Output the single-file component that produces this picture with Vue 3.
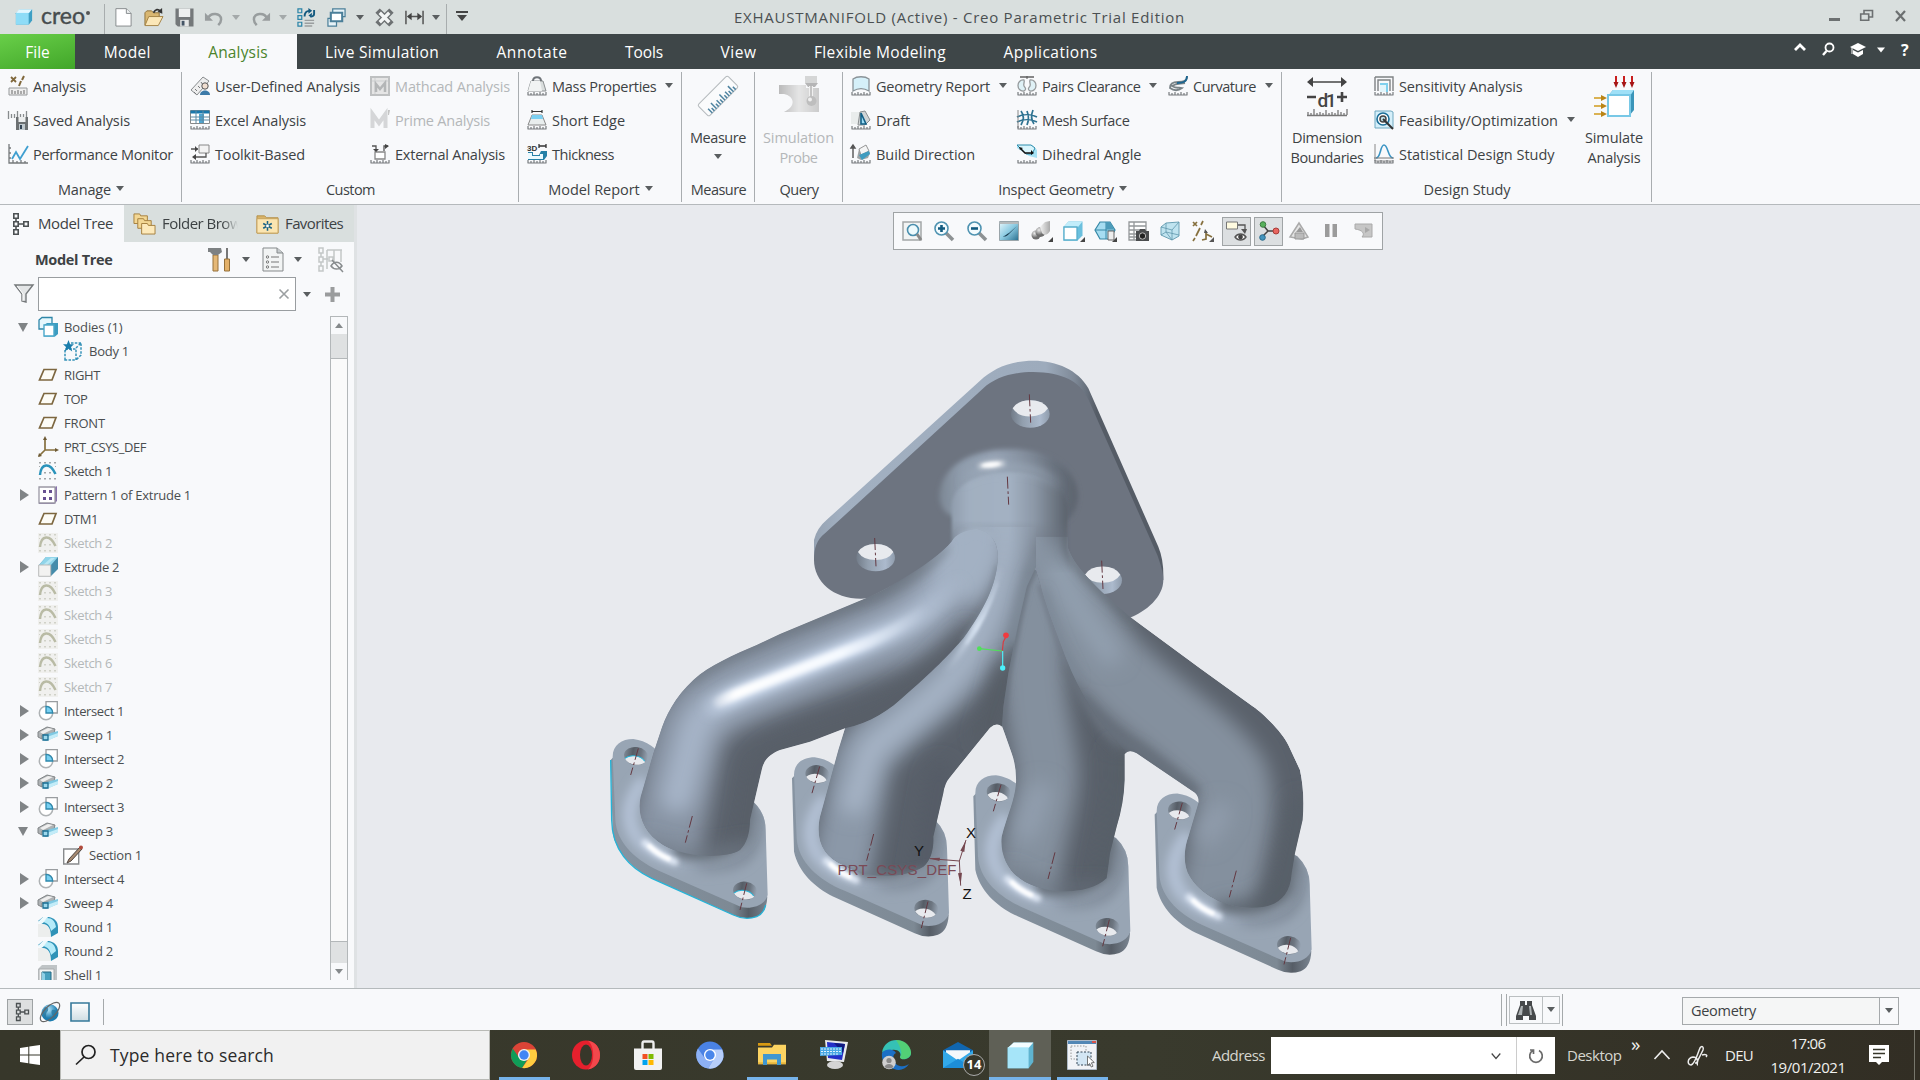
<script setup>
// Adjusts letter spacing so that a label takes up the given width in pixels.
const vFit = {
  mounted(el, { value }) {
    if (!value) return
    const width = el.getBoundingClientRect().width
    el.style.letterSpacing = (value - width) / el.textContent.length + 'px'
  },
}

const ruler = '<path d="M.5 19h19M1 16v3M4 17v2M7 16v3M10 17v2M13 16v3M16 17v2M19 16v3" stroke="#777b7e" fill="none" stroke-width="1.2"/>'
const tree = (c) => `<g fill="none" stroke="${c}" stroke-width="1.6"><path d="M1.8 1.8h4.4v4.4H1.8zM1.8 9.8h4.4v4.4H1.8zM1.8 17.8h4.4v4.4H1.8zM11.8 9.8h4.4v4.4h-4.4zM4 6v4M4 14v4M6.200 12H12"/></g>`
const sketch = (c, d) => `<g fill="${d}"><path d="M1 1h2v1.500H1zM6 1h2v1.500H6zM11 1h2v1.500h-2zM16 1h2v1.500h-2zM1 17h2v1.500H1zM6 17h2v1.500H6zM11 17h2v1.500h-2zM16 17h2v1.500h-2zM6 11h2v1.500H6zM11 11h2v1.500h-2zM1 5h1v1H1zM17 5h1v1h-1z"/></g><path d="M2 14C3 2 12 1 17.500 13" fill="none" stroke="${c}" stroke-width="2.500"/>`

const icons = {
  cube: '<path d="M1 6.500 5 2h14v12.500L15.500 19H1z" fill="#3e9fc4"/><path d="M1 6h14.500L19 2H4.500z" fill="#e2f7ff"/><path d="M1 6h14.200v13H1z" fill="#8edcf7"/>',
  bigcube: '<path d="M.500 5 5 1h14.500v14L16 19.500H.500z" fill="#5fb4d0"/><path d="M.500 5H16l3.500-4H5z" fill="#f2fcff"/><path d="M.500 4.500H16v15H.500z" fill="#a6e5f9"/>',
  newdoc: '<path d="M2 .7h11l5 5V19H2z" fill="#fff" stroke="#85898b"/><path d="M13 .7v5h5" fill="#eef0f1" stroke="#85898b"/>',
  open: '<path d="M1 18V5l2-2h5l2 2h6v5" fill="#d9b772" stroke="#8e713b"/><path d="M1 18.500 5 9h15l-5 9.500z" fill="#fbe7b8" stroke="#a38245"/><path d="M10 5c2-4 5-4 7-2" fill="none" stroke="#333" stroke-width="1.800"/><path d="m19 0 .3 6-5-2z" fill="#333"/>',
  save: '<path d="M.5.500h19v19H3l-2.500-2.500z" fill="#74787a"/><path d="M4 .500h12v9H4z" fill="#eef0f0"/><path d="M5.500 12.500h9v7h-9z" fill="#e4e6e6"/><path d="M7 13.500h3v5H7z" fill="#456"/>',
  undo: '<path d="M4 11c3-7 14-6 14 1 0 3-1 4-3 6" fill="none" stroke="#989d9e" stroke-width="2.600"/><path d="M1 5v8.500h8.500z" fill="#989d9e"/>',
  redo: '<path d="M16 11C13 4 2 5 2 12c0 3 1 4 3 6" fill="none" stroke="#989d9e" stroke-width="2.600"/><path d="M19 5v8.500h-8.500z" fill="#989d9e"/>',
  regen: '<g fill="none" stroke="#2a84a8" stroke-width="1.300"><path d="M1 1h4v4H1zM1 8h4v4H1zM1 15h4v4H1z"/></g><path d="M8 13h10M8 16h10M8 19h8" stroke="#9a9e9f" stroke-width="1.500"/><path d="M8 9C8 4 11 3 13 3M18 2v4c0 2-2 3-4 3" stroke="#145a80" stroke-width="2" fill="none"/><path d="m12 0 4 3-4 3zM15 10l-3-2 4-3z" fill="#145a80"/>',
  windows: '<g fill="#e7f3f8" stroke="#4b7f99" stroke-width="1.300"><path d="M6 1h13v8H6z"/><path d="M1 11h9v8H1z"/><path d="M4 5h12v9H4z" stroke-width="2.200" fill="#fff"/></g>',
  closewin: '<path d="m5 5 10 10M15 5 5 15" stroke="#6d7173" stroke-width="6.500" stroke-linecap="square"/><path d="m5 5 10 10M15 5 5 15" stroke="#f4f6f6" stroke-width="3.500"/>',
  dimtool: '<path d="M1 3v14M19 3v14M3 9h14" stroke="#555" stroke-width="1.600"/><path d="m2 9 5-4v8zM18 9l-5-4v8z" fill="#444"/>',
  analysis: '<path d="m3 1 5 5M8 1 3 6" stroke="#80683c" stroke-width="1.800"/><path d="m16 0-2 4M13 5l-2 5" stroke="#80683c" stroke-width="2"/><path d="M1 12h18v7H1z" fill="#eee" stroke="#96999b"/><path d="M4 14v4M7 15v3M10 14v4M13 15v3M16 14v4" stroke="#666"/>',
  savedan: '<path d="M.500 1v8M3.500 4v4M6.500 4v4M9.500 1v7M12.500 4v4M15.500 4v4M18.500 1v6" stroke="#888c8e" stroke-width="1.300"/><path d="M8 7h12v13H8z" fill="#6c7072"/><path d="M10.500 7h7v5h-7z" fill="#eceeee"/><path d="M11 14h6v6h-6z" fill="#bfc8cd"/><path d="M12 15h2v4h-2z" fill="#345"/>',
  perf: '<path d="M1 0v19h19M1 4h2M1 9h2M1 14h2M5 19v-3M9 19v-2M13 19v-3M17 19v-2" stroke="#75797b" stroke-width="1.300" fill="none"/><path d="m4 15 4-7 4 7 8-13" stroke="#3f9fd0" stroke-width="1.800" fill="none"/>',
  userdef: '<path d="m1 14 12-13 6 4L7 19z" fill="#eee" stroke="#888c8e"/><path d="m5 13 2 2M8 10l2 2M11 6l2 3M4 16l2 2" stroke="#77797b"/><circle cx="15" cy="10" r="3.200" fill="#f0ded0" stroke="#555"/><path d="M10 19c0-6 10-6 10 0z" fill="#3d7ba9"/>',
  excel: '<path d="M.500.500h19v13H.500z" fill="#fff" stroke="#888"/><path d="M.500.500h19v3H.500z" fill="#1a78ac"/><path d="M9 4h5v9H9z" fill="#4ea5d0"/><path d="M6 .500v13M13 .500v13M.500 7h19M.500 10h19" stroke="#5c8ba5"/>' + ruler,
  toolkit: '<path d="M9 1h10v8H9z" fill="#f3f3f3" stroke="#888"/><path d="M1 5h7M16 9v4H4" stroke="#555" fill="none" stroke-width="1.300"/><path d="m8 5-3-3v6zM2 13l4-3v6z" fill="#444"/>' + ruler,
  mathcad: '<path d="M1 1h18v18H1z" fill="#e2e2e2" stroke="#b5b7b8" stroke-width="2"/><path d="M2 5h16M5 2v16" stroke="#c6c8c9"/><path d="M6 16V8l4 5 5-6v9" fill="none" stroke="#a9abac" stroke-width="2.500"/>',
  prime: '<path d="M2.500 18V4l6.500 9 6.500-9v14" fill="none" stroke="#cfd1d2" stroke-width="4"/><path d="M18 0h2l-1 5h-1z" fill="#bbb"/>',
  external: '<path d="M5 8h10v7H5z" fill="#fff" stroke="#888" stroke-width="1.300"/><path d="M2 2h4v5M14 7V2h4" fill="none" stroke="#555" stroke-width="1.300"/><path d="m6 8-3-3h6zM19 2l-4-2v5z" fill="#444"/>' + ruler,
  mass: '<path d="m4 5 12 0 3 10H1z" fill="#d9dddd" stroke="#8c9092"/><path d="m4 5 9 0 2 10H1z" fill="#f1f3f3"/><path d="M6 5c0-5 8-5 8 0" fill="none" stroke="#70757a" stroke-width="2"/>' + ruler,
  shortedge: '<path d="m5 5 10 0 4 10H1z" fill="#e9eeee" stroke="#888"/><path d="M5 5h10l1 4H4z" fill="#7cd0f2"/><path d="M5 0v3M15 0v3M5 1.500h10" stroke="#333" stroke-width="1.200"/>' + ruler,
  thickness: '<text x="0" y="6.500" font-size="8" font-weight="bold" font-family="Liberation Sans,sans-serif" fill="#333">3D</text><path d="M12 2h7M12 0v4M19 0v4" stroke="#333" stroke-width="1.300"/><path d="M1 8h5v3h6l2-4h6v5l-3 4H1z" fill="#2580a7"/><path d="M1 9h4v3h8v-2h3v5H1z" fill="#eafaff"/>' + ruler,
  measure: '<g transform="rotate(-45 20 20)"><rect x="-1" y="12" width="42" height="16" rx="2" fill="#fafbfc" stroke="#b5babd"/><path d="M4 28v-6M7 28v-4M10 28v-8M13 28v-4M16 28v-6M19 28v-4M22 28v-8M25 28v-4M28 28v-6M31 28v-4M34 28v-8M37 28v-4" stroke="#4e83a0" stroke-width="1.500"/></g>',
  probe: '<path d="M0 9h27v3h13v24H5c13-6 10-16 0-18H0z" fill="url(#grey)"/><path d="M26 0h12v7H26z" fill="#d0d0d0"/><path d="M26 7h13l-3 4h-7z" fill="#aaa"/><path d="M32 10v12" stroke="#efefef" stroke-width="4"/><path d="M32 10v12" stroke="#aaa" stroke-width="1.500"/><circle cx="32.500" cy="25" r="5" fill="#b4b4b4"/><circle cx="31" cy="23.500" r="2" fill="#eee"/>',
  georep: '<path d="M2 3c4-3 12-3 16 0v12c-5-3-11-3-16 0z" fill="#d5f0f9" stroke="#8a9398" stroke-width="1.300"/>' + ruler,
  draft: '<path d="M0 2h13v12H0z" fill="#e9ecec"/><path d="m9 2 5-1 5 9-5 5H7z" fill="#cfd4d6" stroke="#8a8e90"/><path d="M10 3v11h5z" fill="#9ddcf5" stroke="#125f86" stroke-width="1.600"/>' + ruler,
  build: '<path d="M2 14V3M0 4l2-3 2 3z" stroke="#555" fill="#555" stroke-width="1.400"/><path d="m8 5 7-4 4 8-2 5-7 2-4-2z" fill="#9fa4a6"/><path d="m8 5 7-4 3 6-8 4z" fill="#f4f5f5" stroke="#999"/><path d="m8 11 10-4 1 3-8 6z" fill="#3f9cc0"/>' + ruler,
  pairs: '<path d="M3 1h14" stroke="#555" stroke-width="1.400"/><path d="M10 0v3" stroke="#555"/><path d="M7 4c-8-1-8 12 0 11 3-2 1-3 0-5s1-4 0-6zM13 4c8-1 8 12 0 11-3-2-1-3 0-5s-1-4 0-6z" fill="#dff1f6" stroke="#969a9c" stroke-width="1.300"/>' + ruler,
  mesh: '<path d="M0 7c6-3 14-3 20 0M0 12c6-3 14-3 20 0M4 1c3 4 3 9 0 14M10 1c2 5 2 9 0 14M16 0c-2 5-2 10 1 14" stroke="#2d7291" fill="none" stroke-width="1.700"/><path d="M1 0v18" stroke="#888"/>' + ruler,
  dihedral: '<path d="M0 1h15l5 5v8l-8-2L0 4z" fill="#a6e2f5"/><path d="M0 1h14l4 3-3 6H9z" fill="#d9f5fc" stroke="#2d8cab"/><path d="m4 5 4 4 6 0" stroke="#111" stroke-width="1.500" fill="none"/><path d="m2 3 4 1-3 2zM17 9l-3-3v5z" fill="#111"/>' + ruler,
  curvature: '<path d="M19 0c0 5-3 6-9 6S2 8 2 12c4 3 8 3 12 0-4-1-5 1-10-2 4-3 8-2 13-3" fill="none" stroke="#7a8387" stroke-width="1.800"/><path d="M19 0c0 6-4 7-10 7" fill="none" stroke="#1d6690" stroke-width="1.800"/>' + ruler,
  dimbound: '<path d="M2 6h36" stroke="#444" stroke-width="1.600"/><path d="m0 6 6-5v10zM40 6l-6-5v10z" fill="#444"/><path d="M0 21h9M30 21h10M35 16v10" stroke="#444" stroke-width="2.600"/><text x="10.500" y="30.500" font-size="19" font-weight="500" font-family="Roboto,sans-serif" fill="#444" textLength="19">d1</text><path d="M0 39.500h40M1 36v3M4 37v2M7 33v6M10 37v2M13 36v3M16 37v2M19 34v5M22 37v2M25 36v3M28 37v2M31 34v5M34 36v3M37 37v2M40 33v6" stroke="#777" stroke-width="1.300"/>',
  sensitivity: '<path d="M1 1h18v14M1 1v14M4 15V4h12v11" fill="none" stroke="#7e8284" stroke-width="1.400"/><path d="M6 7h8v9H6z" fill="#7fd0ee"/><path d="M6 9h6v7H6z" fill="#e2f5fb"/>' + ruler,
  feasibility: '<path d="M1 1h16l2 1v16H1z" fill="#d5effa" stroke="#6fa8c0"/><circle cx="9" cy="9" r="6" fill="#fff" stroke="#1a6e98" stroke-width="1.600"/><circle cx="9" cy="9" r="3" fill="#bfe3ee" stroke="#444" stroke-width="1.500"/><path d="m9 9 10 10" stroke="#333" stroke-width="2"/>',
  statistical: '<path d="M1 0v17h18" fill="none" stroke="#888"/><path d="M2 14C7 14 6 1 10 1s4 13 9 13" fill="none" stroke="#3a94c4" stroke-width="1.600"/><path d="M0 14h20" stroke="#777"/>' + ruler,
  simulate: '<path d="m14 20 5-6h21v20l-5 6H14z" fill="#3b95b9"/><path d="m14 20 5-6h21l-4 6z" fill="#9fe0f7"/><path d="M14 19h22v21H14z" fill="#fff" stroke="#78c8e6" stroke-width="2"/><path d="M22 0v9M30 0v9M38 0v9" stroke="#c81e1e" stroke-width="2"/><path d="m19.500 6 2.500 6 2.500-6zM27.500 6l2.500 6 2.500-6zM35.500 6l2.500 6 2.500-6z" fill="#a51616"/><path d="M0 22h9M0 30h9M0 38h9" stroke="#d09a1c" stroke-width="1.600"/><path d="m7 19 6 3-6 3zM7 27l6 3-6 3zM7 35l6 3-6 3z" fill="#ba8416"/>',
  zoomfit: '<path d="M1 1h18v18H1z" fill="#f2f4f4" stroke="#a3a6a8" stroke-width="1.500"/><circle cx="11" cy="9" r="5.500" fill="#eefafd" stroke="#4a8fae" stroke-width="1.600"/><path d="m15 13 4 6" stroke="#888" stroke-width="3"/>',
  zoomin: '<path d="m12 12 7 7" stroke="#8d9193" stroke-width="3.500"/><circle cx="7.500" cy="7.500" r="6.500" fill="#f3fbfe" stroke="#4f93b1" stroke-width="1.600"/><path d="M4 7.500h7M7.500 4v7" stroke="#125b80" stroke-width="2.600"/>',
  zoomout: '<path d="m12 12 7 7" stroke="#8d9193" stroke-width="3.500"/><circle cx="7.500" cy="7.500" r="6.500" fill="#f3fbfe" stroke="#4f93b1" stroke-width="1.600"/><path d="M4 7.500h7" stroke="#125b80" stroke-width="2.600"/>',
  repaint: '<path d="M.500.500h19v19H.500z" fill="url(#rep)" stroke="#9aa5aa"/><path d="M.500 1h19v2H.500z" fill="#b5babc"/><path d="M10 12 18 5l-8 8c-3 3-5 3-6 2 3 0 3-2 6-3z" fill="#193c50"/>',
  shade: '<circle cx="5" cy="14" r="4.500" fill="url(#ball)"/><circle cx="9.500" cy="11" r="5" fill="url(#ball)"/><path d="M9 6 14 1l5-1v10c-2 4-6 5-8 2z" fill="url(#sil)"/><path d="M22 16v5h-5z" fill="#444"/>',
  box: '<path d="m.500 6 5-5.500h14v14l-5 5H.500z" fill="#6bc0de"/><path d="m.500 6 5-5.500h14L15 6z" fill="#c2edfa"/><path d="M1 6h13v13H1z" fill="#fff" stroke="#58aecb" stroke-width="1.300"/><path d="M22 16v5h-5z" fill="#444"/>',
  views: '<path d="m0 9 5-8h10l5 8-5 9H5z" fill="#a6ddf1" stroke="#3688a6" stroke-width="1.200"/><path d="M0 9h20M11 1v17" stroke="#3688a6"/><path d="M11 1h4l4 7h-8z" fill="#4d9cba"/><path d="M13 10h6v9h-6z" fill="#eee" stroke="#666"/><path d="M22 16v5h-5z" fill="#444"/>',
  camera: '<path d="M1 1h17v18H1z" fill="#fff" stroke="#94989a" stroke-width="1.300"/><path d="M1 5h17M1 9h17M1 13h8M1 16h8M6 1v18" stroke="#94989a" stroke-width="1.300"/><path d="M8 10h3l1-2h5l1 2h3v10H8z" fill="#4a4c4e"/><circle cx="14.500" cy="15" r="3.200" fill="#222" stroke="#bbb"/>',
  persp: '<path d="m1 6 5-4 13-1v14l-7 4-11-5z" fill="#bfe3ef" stroke="#6ba1b5"/><path d="m1 6 11 3v10M12 9l7-8M6 2v9l6 8M1 14l5-3 13 3" stroke="#5f97ac" fill="none" stroke-width=".8"/>',
  datum: '<path d="m1 1 4 4M5 1 1 5M11 0 9 4M8 7l-4 8M14 10v8l-4 1M14 13l6 3M3 17l-2 3" stroke="#86703e" stroke-width="1.700" fill="none"/><path d="m13 8 3 4h-4zM22 16v5h-5z" fill="#555"/>',
  annot: '<path d="M.500 1h11v7H.500z" fill="#fffbe0" stroke="#777"/><path d="M12 4h7v5" fill="none" stroke="#555" stroke-width="1.300"/><path d="m15 8 4 5 2-5z" fill="#555"/><path d="M9 16c3-4 8-4 11 0-3 4-8 4-11 0z" fill="#fff" stroke="#555" stroke-width="1.400"/><circle cx="14.500" cy="16" r="2.400" fill="#444"/>',
  spin: '<path d="m4 4 5 6-6 6M9 10h8" fill="none" stroke="#444" stroke-width="1.500"/><circle cx="4" cy="3.500" r="2.800" fill="#57b05c" stroke="#3b7d40"/><circle cx="3.500" cy="16.500" r="2.800" fill="#4394bd" stroke="#2a6b8c"/><circle cx="17" cy="10" r="3" fill="#e8655f" stroke="#a83c38"/>',
  simres: '<path d="M10 2 1 16l12 2 6-2z" fill="#e4e4e4" stroke="#aaa" stroke-width="1.500"/><path d="M6 12h9v6H6z" fill="#bbb" stroke="#999"/><path d="m7 11 4-5 3 5z" fill="#999"/>',
  pause: '<path d="M4 3h4.500v13H4zM11.500 3H16v13h-4.500z" fill="#9b9b9b"/>',
  stopsim: '<path d="M2 3h17v13H9c3-3 1-7-7-8z" fill="#c6c6c6" stroke="#aaa"/><path d="m12 6 5 3-5 3z" fill="#a8a8a8"/>',
  bodies: '<path d="M1 3 4 .500h10V12H1z" fill="#e5f7fd" stroke="#2e86a8" stroke-width="1.300"/><path d="m6 8 3-2h11v11l-3 2.500H6z" fill="#3c9cc0"/><path d="M6 8h10v11H6z" fill="#fff" stroke="#4aa8ca" stroke-width="1.400"/>',
  body: '<path d="M2 19V8h11v11zM13 7l5-5v12l-5 5M8 2h10" fill="none" stroke="#3692b8" stroke-width="1.500" stroke-dasharray="2.500 1.300"/><path d="m5.500-1 1.600 4.200H11L8 6l1.200 4.500-3.700-2.700-3.700 2.700L3 6 0 3.200h3.900z" fill="#1b7eac"/>',
  plane: '<path d="M6 4.500h12L14 15H1.500z" fill="#fdfcf6" stroke="#7d6740" stroke-width="1.700"/>',
  csys: '<path d="M7 1v12h12M7 13l-6 6" stroke="#86703e" stroke-width="1.700" fill="none"/><path d="m7-1 2 4H5zM21 13l-4-2v4zM0 20l1-4 3 3z" fill="#6d5a34"/>',
  sketch: sketch('#2a93bb', '#a2a6a8'),
  sketchoff: '<path d="M0 0h20v20H0z" fill="#f0f0ee"/>' + sketch('#b9bba5', '#d0d1c8'),
  pattern: '<path d="M1 3h15l3-2v15l-3 3H1z" fill="#8a73ac"/><path d="M1 2h16v16H1z" fill="#fff" stroke="#9a98a4" stroke-width="1.300"/><path d="M5 5h3v3H5zM11 5h3v3h-3zM5 12h3v3H5zM11 12h3v3h-3z" fill="#675092"/>',
  extrude: '<path d="m1 8 7-8h12v12l-7 7z" fill="#458cab"/><path d="m1 8 7-8h12l-7 8z" fill="#90d5ea"/><path d="m5 8 8-7h4l-8 7z" fill="#b7e7f4"/><path d="M.700 8h12v11.300H.700z" fill="#f2f2f1" stroke="#b9bbbb"/>',
  intersect: '<path d="M8 .700h11.300V12H8z" fill="#fff" stroke="#999da0" stroke-width="1.300"/><circle cx="8" cy="12" r="6.700" fill="#fff" stroke="#aeb2b4" stroke-width="1.500"/><path d="M8 5.300A6.700 6.700 0 0 1 14.700 12H8z" fill="#78d0f2" stroke="#2e88ac" stroke-width="1.300"/>',
  sweep: '<path d="m0 7 9-5 8 2-1 4-12 2v4l-4-2z" fill="#aeb2b4" stroke="#808486"/><path d="m2 7 8-4 5 1-10 5z" fill="#eee"/><path d="m5 10 15-4v5L8 16l-3-1z" fill="#7fc8e2"/><path d="m9 12 11-4v3L9 16z" fill="#c3ecf8"/><path d="M5 10h5v5H5z" fill="#9cd8ec" stroke="#1b6e92" stroke-width="1.300"/>',
  section: '<path d="M.700 4h15v15h-15z" fill="#fff" stroke="#888b8d" stroke-width="1.400"/><path d="M17 2 6 14l-2 4 4-2L19 4z" fill="#a78a71" stroke="#4d4540"/><circle cx="18" cy="2.500" r="2" fill="#b04a3c"/>',
  round: '<path d="M0 7h5c5 1 8 5 8 13H0z" fill="#eceeed"/><path d="M0 4 5 0h6c5 1 9 4 9 10v6l-7 4C13 12 10 7 5 7z" fill="#2f93b8"/><path d="m5 5 4-4c5 0 8 3 9 9l-5 4c-1-5-3-8-8-9z" fill="#b5ebf9"/><path d="m0 5 5-5h5L5 6H0z" fill="#eefafd"/>',
  shell: '<path d="m0 4 4-4h15v16l-4 4H0z" fill="#bfc4c6"/><path d="M1 4h15v15H1z" fill="#f3f4f4" stroke="#a8acae"/><path d="M4 7h9v9H4z" fill="#489fbe" stroke="#256a85"/><path d="m4 7 3 2v7H4z" fill="#8fd0e6"/>',
  tree: tree('#4c5153'),
  folders: '<g fill="#f3d794" stroke="#a5803f"><path d="M1 2h6l1 2h7v8H1z"/><path d="M5 7h6l1 2h7v8H5z"/><path d="M9 12h6l1 2h7v9H9z" fill="#fde9ba"/></g>',
  fav: '<path d="M1 4h8l2 2h12v16H1z" fill="#d9b469" stroke="#b48f49"/><path d="M1 7h22v15H1z" fill="#fbe5b1" stroke="#c6a25c"/><path d="M12 9.500v10M7.500 12l9 5M16.500 12l-9 5" stroke="#1b6284" stroke-width="1.600"/><circle cx="12" cy="14.500" r="1.500" fill="#fff"/>',
  hammer: '<path d="M5 8h5v16H5z" fill="#e5b876" stroke="#95703a"/><path d="M0 1h13l1 4-4 3H5L2 5H0z" fill="#7d8183"/><path d="M18 1h2v11h-2z" fill="#777"/><path d="M16.500 12h5v12h-5z" fill="#e3b16a" stroke="#95703a"/>',
  listdoc: '<path d="M2 1h14l6 5v18H2z" fill="#f2f4f4" stroke="#85898b"/><path d="M16 1v5h6" fill="#c6cbcd" stroke="#85898b"/><path d="M10 10h8M10 15h8M10 20h8" stroke="#777"/><g fill="none" stroke="#777"><circle cx="6.500" cy="10" r="1.200"/><circle cx="6.500" cy="15" r="1.200"/><circle cx="6.500" cy="20" r="1.200"/></g>',
  treeeye: '<g fill="none" stroke="#c3c7c8" stroke-width="1.500"><path d="M1 1h4v5H1zM1 10h4v5H1zM1 19h4v5H1zM3 6v4M3 15v4M5 12h5M9 3h15M9 3v19M16 3v14M23 3v12M11 10h4v4h-4z"/></g><path d="M13 19c3-5 8-5 11 0-3 4-8 4-11 0zM14 13l11 12" fill="none" stroke="#898d8f" stroke-width="1.500"/>',
  funnel: '<path d="M1 1h18l-7 9v8l-4-1v-7z" fill="#e3e5e6" stroke="#75797b" stroke-width="1.400"/><path d="m3 2 6 8v7" fill="none" stroke="#fff"/>',
  globe: '<circle cx="10" cy="11" r="8.500" fill="url(#earth)"/><path d="M5 5c4 0 4 3 2 5s0 5-2 6c-3-4-3-7 0-11zM12 8c3-1 5 1 5 3-1 4-3 6-4 6 1-4-3-5-1-9z" fill="#2878a0" opacity=".8"/><ellipse cx="10" cy="10" rx="12.500" ry="5.500" transform="rotate(-45 10 10)" fill="none" stroke="#666" stroke-width="1.200"/>',
  pane: '<path d="M1 1h18v18H1z" fill="url(#pane)" stroke="#36799a" stroke-width="1.600"/>',
  binoc: '<path d="M4 1h5v4h2V1h5v4l4 11v4h-7v-4H7v4H0v-4L4 5z" fill="#46494b"/><path d="m5 6-3 9h4l1-9zM13 6l1 9h2l-1-9z" fill="#aeb3b5"/>',
}

const quick = [
  ['newdoc', 37], ['open', 22], ['save', 40], ['undo', 19], ['', 26], ['redo', 24], ['', 20],
  ['regen', 26], ['windows', 35], ['', 12, 1], ['closewin', 37], ['dimtool', 22], ['', 22, 1],
]
const tabs = [['Live Simulation', 114], ['Annotate', 71], ['Tools', 38], ['View', 36], ['Flexible Modeling', 132], ['Applications', 94]]

const groups = [
  { id: 'manage', title: 'Manage', tw: 53, drop: 1, parts: [
    { c: 'c1', rows: [['analysis', 'Analysis', 53], ['savedan', 'Saved Analysis', 97], ['perf', 'Performance Monitor', 140]] }] },
  { id: 'custom', title: 'Custom', tw: 49, parts: [
    { c: 'c180', rows: [['userdef', 'User-Defined Analysis', 145], ['excel', 'Excel Analysis', 91], ['toolkit', 'Toolkit-Based', 90]] },
    { c: 'c1', rows: [['mathcad', 'Mathcad Analysis', 115, 0, 1], ['prime', 'Prime Analysis', 95, 0, 1], ['external', 'External Analysis', 110]] }] },
  { id: 'report', title: 'Model Report', tw: 91.5, drop: 1, parts: [
    { c: 'c1', rows: [['mass', 'Mass Properties', 104.5, 1], ['shortedge', 'Short Edge', 73], ['thickness', 'Thickness', 62]] }] },
  { id: 'measure', title: 'Measure', tw: 55.5, parts: [{ c: 'b72', big: 'measure', lines: [['Measure', 56]], drop: 1 }] },
  { id: 'query', title: 'Query', tw: 39, parts: [{ c: 'b87', big: 'probe', lines: [['Simulation', 71], ['Probe', 38]], off: 1 }] },
  { id: 'inspect', title: 'Inspect Geometry', tw: 115.5, drop: 1, parts: [
    { c: 'c166', rows: [['georep', 'Geometry Report', 114, 1], ['draft', 'Draft', 34], ['build', 'Build Direction', 99]] },
    { c: 'c151', rows: [['pairs', 'Pairs Clearance', 98.5, 1], ['mesh', 'Mesh Surface', 87.5], ['dihedral', 'Dihedral Angle', 99.5]] },
    { c: 'c1', rows: [['curvature', 'Curvature', 63, 1]] }] },
  { id: 'study', title: 'Design Study', tw: 87, parts: [
    { c: 'b74', big: 'dimbound', lines: [['Dimension', 70], ['Boundaries', 73]] },
    { c: 'c211', rows: [['sensitivity', 'Sensitivity Analysis', 123.5], ['feasibility', 'Feasibility/Optimization', 159, 1], ['statistical', 'Statistical Design Study', 155.5]] },
    { c: 'b60', big: 'simulate', lines: [['Simulate', 58], ['Analysis', 53]] }] },
]

const viewTools = ['zoomfit', 'zoomin', 'zoomout', 'repaint', 'shade', 'box', 'views', 'camera', 'persp', 'datum', 'annot', 'spin', 'simres', 'pause', 'stopsim']

// [icon, label, expander, width, child]
const nodes = [
  ['bodies', 'Bodies (1)', 'open', 58.5], ['body', 'Body 1', '', 40, 1],
  ['plane', 'RIGHT', '', 36], ['plane', 'TOP', '', 23], ['plane', 'FRONT', '', 41],
  ['csys', 'PRT_CSYS_DEF', '', 82], ['sketch', 'Sketch 1', '', 48],
  ['pattern', 'Pattern 1 of Extrude 1', 'shut', 127], ['plane', 'DTM1', '', 34],
  ['sketchoff', 'Sketch 2', '', 48], ['extrude', 'Extrude 2', 'shut', 55],
  ...[3, 4, 5, 6, 7].map((n) => ['sketchoff', 'Sketch ' + n, '', 48]),
  ['intersect', 'Intersect 1', 'shut', 60], ['sweep', 'Sweep 1', 'shut', 49],
  ['intersect', 'Intersect 2', 'shut', 60], ['sweep', 'Sweep 2', 'shut', 49],
  ['intersect', 'Intersect 3', 'shut', 60], ['sweep', 'Sweep 3', 'open', 49],
  ['section', 'Section 1', '', 53, 1],
  ['intersect', 'Intersect 4', 'shut', 60], ['sweep', 'Sweep 4', 'shut', 49],
  ['round', 'Round 1', '', 49], ['round', 'Round 2', '', 49], ['shell', 'Shell 1', '', 38],
]
const flanges = [0, 1, 2, 3]
</script>

<template>
  <div class="app">
    <svg class="defs" width="0" height="0">
      <defs>
        <linearGradient id="grey"><stop offset="0" stop-color="#b0b0b0" /><stop offset=".5" stop-color="#e2e2e2" /><stop offset="1" stop-color="#c4c4c4" /></linearGradient>
        <linearGradient id="rep" x2="1" y2="1"><stop offset="0" stop-color="#e8f8fd" /><stop offset=".5" stop-color="#8ccbe2" /><stop offset="1" stop-color="#286e8e" /></linearGradient>
        <linearGradient id="sil"><stop offset="0" stop-color="#f2f2f2" /><stop offset="1" stop-color="#aaa" /></linearGradient>
        <radialGradient id="ball" cx=".35" cy=".3"><stop offset="0" stop-color="#eee" /><stop offset="1" stop-color="#6e6e6e" /></radialGradient>
        <radialGradient id="earth" cx=".4" cy=".3"><stop offset="0" stop-color="#b7e7fa" /><stop offset="1" stop-color="#1d7db0" /></radialGradient>
        <linearGradient id="pane" x2="0" y2="1"><stop offset="0" stop-color="#fff" /><stop offset="1" stop-color="#cfdde3" /></linearGradient>
      </defs>
    </svg>

    <header class="titlebar">
      <svg class="logo" viewBox="0 0 20 20" v-html="icons.cube" />
      <span class="brand" v-fit="44">creo</span><i class="branddot" />
      <div class="quick">
        <span v-for="(q, i) in quick" :key="i" class="q" :style="{ width: q[1] + 'px' }">
          <svg v-if="q[0]" viewBox="0 0 20 20" v-html="icons[q[0]]" />
          <i v-else class="tri" :class="{ dim: !q[2] }" />
        </span>
      </div>
      <span class="more"><i /></span>
      <span class="title"><span v-fit="451">EXHAUSTMANIFOLD (Active) - Creo Parametric Trial Edition</span></span>
      <svg class="wincon" width="80" height="20" viewBox="0 0 80 20">
        <path d="M1 13.500h11" stroke="#6c7071" stroke-width="3" />
        <path d="M32.700 8h8v6.300h-8zM36 8V4.500h8.500v6.500h-3.500" fill="none" stroke="#6c7071" stroke-width="1.600" />
        <path d="m68 5 9 10M77 5l-9 10" stroke="#6c7071" stroke-width="2.200" />
      </svg>
    </header>

    <nav class="tabs">
      <span class="tab file"><b v-fit="24.500">File</b></span>
      <span class="tab"><b v-fit="47">Model</b></span>
      <span class="tab active"><b v-fit="59.500">Analysis</b></span>
      <span v-for="t in tabs" :key="t[0]" class="tab"><b v-fit="t[1]">{{ t[0] }}</b></span>
      <svg class="help" width="126" height="20" viewBox="1790 0 126 20">
        <path d="m1795 11 5-5 5 5" fill="none" stroke="#fff" stroke-width="2.800" />
        <circle cx="1829.500" cy="8.500" r="4" fill="none" stroke="#fff" stroke-width="1.800" /><path d="m1826.500 12-3.500 4" stroke="#fff" stroke-width="2.400" />
        <path d="m1850 8 8-4 8 4-8 4zM1853 11v4l5 3 5-3v-4l-5 2.500z" fill="#fff" /><path d="M1852 8v7" stroke="#fff" />
        <path d="M1877 8.500h8l-4 5z" fill="#fff" />
        <text x="1901" y="16.500" class="qm">?</text>
      </svg>
    </nav>

    <section class="ribbon">
      <div v-for="g in groups" :key="g.id" class="group" :class="g.id">
        <div class="parts">
          <template v-for="(p, i) in g.parts" :key="i">
            <div v-if="p.rows" class="col" :class="p.c">
              <div v-for="r in p.rows" :key="r[1]" class="cmd" :class="{ off: r[4] }">
                <svg viewBox="0 0 20 20" v-html="icons[r[0]]" /><span v-fit="r[2]">{{ r[1] }}</span><i v-if="r[3]" class="tri" />
              </div>
            </div>
            <div v-else class="big" :class="[p.c, { off: p.off }]">
              <svg viewBox="0 0 40 40" v-html="icons[p.big]" />
              <div v-for="l in p.lines" :key="l[0]" class="line"><span v-fit="l[1]">{{ l[0] }}</span></div>
              <i v-if="p.drop" class="tri" />
            </div>
          </template>
        </div>
        <div class="gtitle"><span v-fit="g.tw">{{ g.title }}</span><i v-if="g.drop" class="tri" /></div>
      </div>
    </section>

    <main class="work">
      <aside class="side">
        <div class="stabs">
          <span class="stab on"><svg class="s24 t1" viewBox="0 0 18 24" v-html="icons.tree" /><b v-fit="75">Model Tree</b></span>
          <span class="stab fold"><svg class="s24" viewBox="0 0 24 24" v-html="icons.folders" /><b class="fade"><span v-fit="79">Folder Brow</span></b></span>
          <span class="stab favs"><svg class="s24" viewBox="0 0 24 24" v-html="icons.fav" /><b v-fit="58">Favorites</b></span>
        </div>
        <div class="shead">
          <strong v-fit="77.500">Model Tree</strong>
          <svg class="h1" viewBox="0 0 25 25" v-html="icons.hammer" /><i class="tri" />
          <svg class="h2" viewBox="0 0 25 25" v-html="icons.listdoc" /><i class="tri" />
          <svg class="h3" viewBox="0 0 25 25" v-html="icons.treeeye" />
        </div>
        <div class="filter">
          <svg class="fun" viewBox="0 0 20 20" v-html="icons.funnel" />
          <div class="input"><svg width="12" height="12" viewBox="0 0 12 12"><path d="m1.500 1.500 9 9M10.500 1.500l-9 9" stroke="#9b9fa1" stroke-width="1.600" /></svg></div>
          <i class="tri" />
          <svg class="plus" width="15" height="15" viewBox="0 0 15 15"><path d="M0 7.500h15M7.500 0v15" stroke="#9a9c9d" stroke-width="4" /></svg>
        </div>
        <div class="treewrap">
          <div class="nodes">
            <div v-for="(n, i) in nodes" :key="i" class="node" :class="{ child: n[4], gone: n[0] === 'sketchoff' }">
              <span class="exp"><i :class="n[2]" /></span>
              <svg viewBox="0 0 20 20" v-html="icons[n[0]]" /><span v-fit="n[3]">{{ n[1] }}</span>
            </div>
          </div>
          <div class="scroll"><span class="sb"><i class="up" /></span><span class="thumb" /><span class="sb"><i class="tri" /></span></div>
        </div>
      </aside>

      <div class="view">
        <svg class="model" viewBox="357 206 1563 782" width="1563" height="782">
          <defs>
            <filter id="b4" filterUnits="userSpaceOnUse" x="-300" y="-300" width="3000" height="2800"><feGaussianBlur stdDeviation="4" /></filter>
            <filter id="b8" filterUnits="userSpaceOnUse" x="-300" y="-300" width="3000" height="2800"><feGaussianBlur stdDeviation="8" /></filter>
            <filter id="b14" filterUnits="userSpaceOnUse" x="-300" y="-300" width="3000" height="2800"><feGaussianBlur stdDeviation="14" /></filter>
            <filter id="b28" filterUnits="userSpaceOnUse" x="-300" y="-300" width="3000" height="2800"><feGaussianBlur stdDeviation="28" /></filter>
            <linearGradient id="edge" gradientUnits="userSpaceOnUse" x1="670" x2="1520" y1="0" y2="0"><stop offset="0" stop-color="#95a2b2" /><stop offset=".1" stop-color="#a2b0c1" /><stop offset=".82" stop-color="#9dabbc" /><stop offset=".92" stop-color="#7f8a98" /><stop offset="1" stop-color="#555c66" /></linearGradient>
            <linearGradient id="wall"><stop offset="0" stop-color="#727c89" /><stop offset=".3" stop-color="#929fae" /><stop offset=".75" stop-color="#acbacd" /><stop offset="1" stop-color="#8f9cac" /></linearGradient>
            <linearGradient id="hole"><stop offset="0" stop-color="#7d8894" /><stop offset=".35" stop-color="#565d66" /><stop offset=".7" stop-color="#6d7681" /><stop offset="1" stop-color="#98a5b4" /></linearGradient>
            <linearGradient id="neck" gradientUnits="userSpaceOnUse" x1="1085" x2="1432" y1="0" y2="0"><stop offset="0" stop-color="#909dad" /><stop offset=".15" stop-color="#a1afc0" /><stop offset=".5" stop-color="#a3b1c2" /><stop offset=".72" stop-color="#8b97a6" /><stop offset=".92" stop-color="#68717c" /><stop offset="1" stop-color="#5b626c" /></linearGradient>
            <linearGradient id="bead"><stop offset="0" stop-color="#7c8794" /><stop offset=".15" stop-color="#8f9cac" /><stop offset=".4" stop-color="#97a4b5" /><stop offset=".62" stop-color="#848f9e" /><stop offset=".82" stop-color="#6a737f" /><stop offset="1" stop-color="#5c636d" /></linearGradient>
            <linearGradient id="side" gradientUnits="userSpaceOnUse" x1="60" x2="532" y1="0" y2="0"><stop offset="0" stop-color="#8794a2" /><stop offset=".78" stop-color="#7d8994" /><stop offset=".88" stop-color="#565d66" /><stop offset="1" stop-color="#7a8591" /></linearGradient>
            <linearGradient id="ring" gradientUnits="userSpaceOnUse" x1="90" x2="520" y1="0" y2="0"><stop offset="0" stop-color="#b3c1d5" /><stop offset=".3" stop-color="#adbbce" /><stop offset=".6" stop-color="#8a96a5" /><stop offset="1" stop-color="#838f9d" /></linearGradient>
            <linearGradient id="shine" gradientUnits="userSpaceOnUse" x1="370" x2="1010" y1="0" y2="0"><stop offset="0" stop-color="#fff" stop-opacity=".2" /><stop offset=".1" stop-color="#fff" /><stop offset=".6" stop-color="#f6faff" /><stop offset="1" stop-color="#dfeaf8" stop-opacity="0" /></linearGradient>
            <linearGradient id="glow" gradientUnits="userSpaceOnUse" x1="340" x2="1140" y1="0" y2="0"><stop offset="0" stop-color="#c2d0e4" stop-opacity=".2" /><stop offset=".1" stop-color="#cbd9ed" /><stop offset=".6" stop-color="#c8d6ea" /><stop offset="1" stop-color="#b5c3d6" stop-opacity="0" /></linearGradient>
            <linearGradient id="rim" gradientUnits="userSpaceOnUse" x1="0" x2="0" y1="1000" y2="650"><stop offset="0" stop-color="#cfdcee" stop-opacity="0" /><stop offset=".4" stop-color="#dce8f6" /><stop offset="1" stop-color="#b9c7da" stop-opacity="0" /></linearGradient>
            <linearGradient id="fadeg" gradientUnits="userSpaceOnUse" x1="0" x2="0" y1="540" y2="700"><stop offset="0" stop-color="#fff" /><stop offset="1" stop-color="#000" /></linearGradient>
            <mask id="fadem" maskUnits="userSpaceOnUse" x="900" y="300" width="700" height="500"><path d="M900 300h700v500H900z" fill="url(#fadeg)" /></mask>
            <path id="s1" d="M1085 605C1040 660 900 745 820 778L570 882L500 915C430 945 360 975 310 1020C255 1070 225 1130 210 1180L190 1240L152 1370C140 1420 160 1480 220 1515C280 1550 400 1560 450 1530C470 1510 480 1480 480 1440L515 1290C522 1255 545 1240 570 1230L660 1205L765 1165C840 1150 900 1110 950 1062C1040 985 1090 930 1120 895C1180 810 1220 740 1224 650Q1222 580 1160 567Q1100 575 1085 605Z" />
            <path id="s2" d="M765 1165L745 1230L690 1430C675 1500 700 1550 760 1575C830 1615 930 1620 1000 1580C1025 1560 1032 1520 1030 1490L1060 1360Q1064 1330 1080 1312L1130 1250L1200 1163Q1220 1145 1236 1160L1240 1100L1255 1000L1285 850L1310 740L1338 680V560H1120V780Z" />
            <path id="s3" d="M1235 1155L1265 1240Q1280 1280 1278 1330C1275 1380 1250 1430 1235 1490C1228 1560 1270 1620 1340 1640C1400 1662 1500 1662 1550 1615L1560 1540L1580 1460Q1602 1390 1604 1320V1240L1605 1232L1590 1215C1520 1140 1470 1060 1430 960C1400 880 1366 800 1350 730L1338 690L1200 680V1000Z" />
            <path id="s4" d="M1432 590L1434 625C1455 690 1550 770 1620 830L1830 985L1990 1100C2020 1120 2080 1180 2095 1215L2130 1290Q2145 1360 2138 1440L2115 1540L2105 1600C2100 1680 2050 1705 1980 1703C1900 1702 1830 1660 1800 1610C1780 1580 1780 1530 1795 1490L1825 1390Q1828 1370 1815 1358L1640 1240Q1616 1226 1605 1242L1540 1250L1350 1000L1290 690V590Z" />
            <clipPath id="k1"><use href="#s1" /></clipPath><clipPath id="k2"><use href="#s2" /></clipPath>
            <clipPath id="k3"><use href="#s3" /></clipPath><clipPath id="k4"><use href="#s4" /></clipPath>
          </defs>
          <g transform="translate(590 340) scale(.33333)">
            <path d="M672 660V600Q680 565 712 538L1170 122C1210 85 1260 62 1330 62C1400 62 1465 90 1495 145L1705 620Q1722 660 1720 720L1500 700L900 500Z" fill="url(#edge)" />
            <path d="M672 660C672 625 680 600 705 580L1180 145C1215 112 1270 96 1330 96C1415 98 1468 120 1496 180L1702 645C1712 675 1720 695 1720 720C1720 770 1670 815 1615 835L1400 700L900 740L835 775C740 785 672 730 672 660Z" fill="#6d7480" />
            <g v-for="h in [[1321, 222], [857, 653], [1538, 721]]" :key="h[0]" :transform="`translate(${h[0]} ${h[1]})`">
              <ellipse rx="58" ry="41" fill="url(#wall)" />
              <path d="M-53-17A58 41 0 0 1 53-17A58 41 0 0 1-53-17Z" fill="#e8eaee" />
              <path d="M-3-59L1 26" class="axis" />
            </g>
            <path d="M1048 470C1050 380 1140 328 1265 328C1390 330 1462 390 1464 470C1460 510 1448 530 1425 545L1100 530C1065 525 1050 500 1048 470Z" fill="url(#bead)" filter="url(#b8)" />

            <g v-for="k in flanges" :key="k" :transform="`translate(${k * 544} ${840 + k * 54.500})`">
              <path d="M62 420L68 640C80 700 130 748 185 775L430 885Q465 902 500 890Q530 878 532 830L400 700L100 380Z" fill="url(#side)" />
              <path v-if="k === 0" d="M62 420L65 600C66 690 120 745 185 775L430 885Q465 902 500 890Q522 880 527 855" fill="none" stroke="#24b4d8" stroke-width="4" />
              <path :id="'face' + k" d="M68 410C68 375 95 357 130 357C170 362 200 385 230 420L490 545Q527 580 527 630L533 825C525 855 490 868 455 862L220 758C140 725 80 670 76 600Z" fill="#98a5b4" />
              <clipPath :id="'fc' + k"><use :href="'#face' + k" /></clipPath>
              <g :clip-path="`url(#fc${k})`">
                <path d="M165 480C95 560 105 650 200 700C270 738 380 760 450 720Q505 690 505 570" fill="none" stroke="url(#ring)" stroke-width="44" filter="url(#b14)" />
                <path d="M250 708C330 735 440 722 480 650L500 540L300 500Z" fill="#68717c" filter="url(#b14)" />
                <path d="M165 668Q200 705 255 726" fill="none" stroke="#e6eefa" stroke-width="20" filter="url(#b8)" stroke-linecap="round" />
                <path d="M178 678Q205 704 236 716" fill="none" stroke="#fff" stroke-width="13" filter="url(#b4)" stroke-linecap="round" />
              </g>
              <g v-for="h in [[138, 408], [465, 812]]" :key="h[0]" :transform="`translate(${h[0]} ${h[1]}) rotate(8)`">
                <ellipse rx="36" ry="27" fill="url(#hole)" />
                <path d="M-32 12A36 27 0 0 1 30 14A36 27 0 0 1-32 12Z" fill="#e8eaee" />
                <path v-if="k === 0" d="M-32 12A36 27 0 0 1 28 12" fill="none" stroke="#24b4d8" stroke-width="3" />
              </g>
              <path d="M145 385L122 465M470 790L450 870" class="axis" />
            </g>

            <g clip-path="url(#k4)">
              <use href="#s4" fill="#5a616b" />
              <path d="M1880 1720C1890 1540 1960 1440 1920 1310C1840 1190 1640 1080 1530 940Q1430 800 1380 610" class="s" stroke="#84909e" stroke-width="230" filter="url(#b28)" />
              <path d="M1850 1480Q1870 1450 1890 1420" class="s" stroke="#909cac" stroke-width="70" filter="url(#b28)" />
              <path d="M1560 940C1480 830 1410 740 1380 600" class="s" stroke="#93a0b0" stroke-width="70" filter="url(#b28)" />
              <path d="M1434 560V625C1455 690 1550 770 1620 830" class="s" stroke="#69727d" stroke-width="22" filter="url(#b14)" />
              <path d="M1360 760Q1400 900 1460 1010" class="s" stroke="#7d8997" stroke-width="26" filter="url(#b14)" />
              <path d="M1480 1090Q1560 1190 1650 1230L1810 1350" class="s" stroke="#68717d" stroke-width="34" filter="url(#b14)" />
              <path d="M1900 1720Q2060 1720 2090 1600L2130 1400" class="s" stroke="#575e68" stroke-width="60" filter="url(#b28)" />
            </g>
            <g clip-path="url(#k3)">
              <use href="#s3" fill="#59606a" />
              <path d="M1310 1660C1320 1500 1370 1400 1370 1300C1360 1180 1320 1100 1330 900V650" class="s" stroke="#84909e" stroke-width="190" filter="url(#b28)" />
              <path d="M1310 1470Q1330 1410 1350 1360" class="s" stroke="#929faf" stroke-width="70" filter="url(#b28)" />
              <path d="M1338 680L1310 740L1285 850L1255 1000L1236 1160" class="s" stroke="#69727e" stroke-width="16" filter="url(#b8)" />
              <path d="M1350 740Q1400 900 1430 980" class="s" stroke="#737d8a" stroke-width="14" filter="url(#b8)" />
              <path d="M1440 980Q1500 1130 1600 1220" class="s" stroke="#6a737f" stroke-width="34" filter="url(#b14)" />
              <path d="M1590 1250V1320Q1580 1450 1545 1600" class="s" stroke="#575e67" stroke-width="70" filter="url(#b28)" />
              <path d="M1260 1600Q1360 1670 1540 1650" class="s" stroke="#68717d" stroke-width="30" filter="url(#b28)" />
            </g>
            <g clip-path="url(#k2)">
              <use href="#s2" fill="#59606a" />
              <path d="M750 1600L815 1260C900 1120 1090 1060 1180 870Q1260 740 1240 480" class="s" stroke="#8b98a8" stroke-width="180" filter="url(#b28)" />
              <path d="M790 1390L840 1230C960 1120 1080 1060 1160 900Q1250 740 1255 450" class="s" stroke="#a7b5c7" stroke-width="70" filter="url(#b28)" />
              <path d="M1040 1030Q1170 880 1226 690" class="s" stroke="url(#rim)" stroke-width="16" filter="url(#b8)" />
              <path d="M1130 910Q1190 830 1222 730" class="s" stroke="url(#rim)" stroke-width="7" filter="url(#b4)" />
              <path d="M1180 1190Q1215 1110 1245 980" class="s" stroke="#545b64" stroke-width="46" filter="url(#b28)" />
              <path d="M1338 660L1300 760L1270 900" class="s" stroke="#7e8a98" stroke-width="30" filter="url(#b14)" />
              <path d="M1000 1600L1050 1300" class="s" stroke="#555c66" stroke-width="70" filter="url(#b28)" />
              <path d="M740 1600Q880 1640 1020 1600" class="s" stroke="#707a86" stroke-width="34" filter="url(#b14)" />
            </g>
            <g mask="url(#fadem)">
              <path d="M1085 620V500C1090 360 1425 360 1432 500V628L1450 700L1380 720H1160Z" fill="url(#neck)" filter="url(#b4)" />
              <path d="M1110 440C1130 380 1370 370 1410 450C1400 400 1330 372 1250 372S1130 390 1110 440Z" fill="#9ba9b9" filter="url(#b14)" />
            </g>
            <ellipse cx="1205" cy="374" rx="40" ry="8" transform="rotate(-6 1205 374)" fill="#fff" filter="url(#b8)" />
            <ellipse cx="1203" cy="374" rx="28" ry="6" transform="rotate(-6 1203 374)" fill="#fff" filter="url(#b4)" />
            <g clip-path="url(#k1)">
              <use href="#s1" fill="#5a616b" />
              <path d="M215 1560L290 1200C330 1080 430 1060 600 990L900 880C1060 800 1150 700 1150 500" class="s" stroke="#8793a3" stroke-width="220" filter="url(#b28)" />
              <path d="M260 1370L310 1180C340 1090 430 1070 600 1000L920 860Q1120 760 1150 500" class="s" stroke="#a6b4c7" stroke-width="100" filter="url(#b28)" />
              <path d="M1060 500H1240V640Q1215 730 1150 790L1060 740Z" fill="#a3b1c3" filter="url(#b28)" />
              <path d="M365 1100Q420 1072 520 1032L860 895Q1000 840 1110 740" class="s" stroke="url(#glow)" stroke-width="56" filter="url(#b14)" />
              <path d="M385 1086Q440 1060 530 1026L840 905Q920 870 1000 815" class="s" stroke="url(#shine)" stroke-width="32" filter="url(#b8)" />
              <path d="M310 1025Q350 985 500 915L820 778L940 725Q1030 675 1070 625" class="s" stroke="#78838f" stroke-width="14" filter="url(#b14)" />
              <path d="M450 1560L490 1300Q510 1230 650 1190L800 1140Q950 1070 1050 965L1130 880" class="s" stroke="#565d66" stroke-width="42" filter="url(#b28)" />
              <path d="M1120 900Q1200 800 1222 680" class="s" stroke="#7f8b9a" stroke-width="10" filter="url(#b8)" />
              <path d="M170 1520Q300 1580 480 1530" class="s" stroke="#6f7985" stroke-width="44" filter="url(#b28)" />
            </g>
            <path d="M1115 590Q1150 556 1205 590" class="s" stroke="#a3b1c2" stroke-width="18" filter="url(#b8)" />

            <path d="M1252 410L1256 494M307 1428L286 1508M851 1482L830 1562M1395 1537L1374 1617M1939 1592L1918 1672" class="axis" />
            <g stroke-width="3.500" fill="none">
              <path d="M1237 933L1240 905L1248 890" stroke="#d93b40" /><circle cx="1248" cy="886" r="8.500" fill="#f23a3f" stroke="none" />
              <path d="M1237 933L1168 926" stroke="#50e05a" /><circle cx="1168" cy="926" r="7" fill="#50e05a" stroke="none" />
              <path d="M1238 933V984" stroke="#4cf0fa" /><circle cx="1238" cy="984" r="8" fill="#4cf0fa" stroke="none" />
            </g>
            <g stroke="#74474f" stroke-width="3" fill="#74474f">
              <path d="M1108 1563L1020 1556M1108 1563L1128 1500M1108 1563L1112 1637" />
              <path d="M1016 1555l34-2-2 10zM1127 1502l-4 34-12-4zM1112 1634l-8-34 12-2z" stroke="none" />
            </g>
          </g>
          <text x="837.500" y="875" class="cs" textLength="119">PRT_CSYS_DEF</text>
          <text x="966" y="837.500" class="ax">X</text><text x="914" y="855.500" class="ax">Y</text><text x="962.500" y="899" class="ax">Z</text>
        </svg>
        <div class="vtools">
          <span v-for="t in viewTools" :key="t" class="vt" :class="{ on: t === 'annot' || t === 'spin' }"><i><svg viewBox="0 0 20 20" v-html="icons[t]" /></i></span>
        </div>
      </div>
    </main>

    <footer class="status">
      <span class="sbtn"><svg viewBox="0 0 18 24" v-html="icons.tree" /></span>
      <svg class="s20 g" viewBox="0 0 20 20" v-html="icons.globe" />
      <svg class="s20" viewBox="0 0 20 20" v-html="icons.pane" />
      <i class="vline" />
      <div class="find"><span class="bino"><svg viewBox="0 0 20 20" v-html="icons.binoc" /></span><span class="fd"><i class="tri" /></span></div>
      <div class="combo"><span class="ct"><span v-fit="65">Geometry</span></span><span class="cd"><i class="tri" /></span></div>
    </footer>

    <div class="taskbar">
      <span class="start"><svg width="20" height="20" viewBox="0 0 20 20"><path d="M0 3 8.300 1.800V9.500H0zM9.300 1.600 20 0v9.500H9.300zM0 10.500h8.300v7.800L0 17zM9.300 10.500H20V20L9.300 18.400z" fill="#fff" /></svg></span>
      <div class="search">
        <svg width="22" height="22" viewBox="0 0 22 22"><circle cx="13.500" cy="8" r="6.500" fill="none" stroke="#222" stroke-width="1.700" /><path d="M9 13 1 20.500" stroke="#222" stroke-width="1.700" /></svg>
        <span v-fit="164">Type here to search</span>
      </div>
      <div class="apps">
        <span class="tb run"><svg width="28" height="28" viewBox="0 0 30 30"><circle cx="15" cy="15" r="14" fill="#db4437" /><path d="M3 8A14 14 0 0 0 13 29L19 19 9 17z" fill="#0f9d58" /><path d="M13 29A14 14 0 0 0 27.500 9H15l5 10z" fill="#ffcd40" /><circle cx="15" cy="15" r="6.500" fill="#f1f1f1" /><circle cx="15" cy="15" r="5" fill="#4285f4" /></svg></span>
        <span class="tb"><svg width="30" height="30" viewBox="0 0 30 30"><ellipse cx="15" cy="15" rx="14" ry="14.500" fill="#e5202d" /><path d="M17 .700C33 3 33 27 17 29.400 24 24 24 6 17 .700z" fill="#f3484c" /><ellipse cx="15" cy="15" rx="6" ry="10.500" fill="#37372a" /></svg></span>
        <span class="tb"><svg width="30" height="30" viewBox="0 0 30 30"><path d="M9.500 9V3.500Q9.500 1.500 11 1.500h8q1.500 0 1.500 2V9" fill="none" stroke="#eee" stroke-width="2.400" /><path d="M1 8.500h28V28q0 2-2 2H3q-2 0-2-2z" fill="#f2f2f2" /><path d="M9.500 14h5v5h-5z" fill="#f25022" /><path d="M15.500 14h5v5h-5z" fill="#7fba00" /><path d="M9.500 20h5v5h-5z" fill="#00a4ef" /><path d="M15.500 20h5v5h-5z" fill="#ffb900" /></svg></span>
        <span class="tb"><svg width="28" height="28" viewBox="0 0 30 30"><circle cx="15" cy="15" r="14.500" fill="#4a82e4" /><path d="M2 8A14.500 14.500 0 0 0 13 29.500l6-10L9 18z" fill="#8db1f5" /><path d="M13 29.500A14.500 14.500 0 0 0 28 9H16l4 9z" fill="#b7cefa" /><circle cx="15" cy="15" r="6.500" fill="#fff" /><circle cx="15" cy="15" r="5" fill="#4a86ea" /></svg></span>
        <span class="tb run"><svg class="up1" width="28" height="24" viewBox="0 0 28 26" preserveAspectRatio="none"><path d="M0 1h12l2 3H0z" fill="#d89a12" /><path d="M0 6h14l2-3h12v21H0z" fill="#fcd462" /><path d="M0 22h28v2H0z" fill="#e8b63c" /><path d="M5 25V13h18v12h-4v-6h-10v6z" fill="#3f97d0" /></svg></span>
        <span class="tb"><svg width="30" height="30" viewBox="0 0 30 30"><path d="m6 0 23 2-4 20-17-1z" fill="#e8eaec" /><path d="m8 2 18 2-3 16-14-2z" fill="#2430c8" /><path d="m15 3 11 1-2 9z" fill="#101a80" /><path d="M1 7h22v8L1 16z" fill="#49a8e4" /><path d="M2 9h20M2 11.500h20M2 14h18" stroke="#e2f3fd" stroke-dasharray="2 1" /><ellipse cx="16" cy="25" rx="8" ry="4" fill="#d4d4d4" /></svg></span>
        <span class="tb"><svg width="30" height="30" viewBox="0 0 30 30"><path d="M1 13C3-4 27-4 30 12c1 8-11 9-11 5 2-4-2-8-8-7C6 10 2 12 1 13z" fill="#35c1b5" /><path d="M15 0c10 0 15 7 15 13s-11 8-11 4c3-2 1-10-4-17z" fill="#63d854" opacity=".65" /><path d="M1 13c4-5 12-4 14 0-5 2-3 12 4 13 4 1 7-1 9-2-4 6-10 7-15 5C4 27 0 20 1 13z" fill="#1b6fc4" /><circle cx="8" cy="22.500" r="6.800" fill="#cfcfcf" /><circle cx="8" cy="20.500" r="2.600" fill="#888" /><path d="M3.500 27c1-4 8-4 9 0-3 2-6 2-9 0z" fill="#888" /></svg></span>
        <span class="tb"><svg width="30" height="28" viewBox="0 0 30 30" preserveAspectRatio="none"><path d="M0 10 15 1l15 9v19H0z" fill="#1066b0" /><path d="M3 10h24v6l-12 8L3 16z" fill="#f4f8fb" /><path d="M0 10 15 21 30 10v19H0z" fill="#32a9ea" /><path d="M0 29 15 19l15 10z" fill="#1d8ed8" /></svg><em>14</em></span>
        <span class="tb sel run"><svg width="27" height="28" viewBox="0 0 20 20" preserveAspectRatio="none" v-html="icons.bigcube" /></span>
        <span class="tb run"><svg width="30" height="30" viewBox="0 0 30 30"><path d="M.500.500h29v29H.500z" fill="#f1f3f7" stroke="#aeb9c6" /><path d="M1 1h28v3H1z" fill="#5387b5" /><path d="M25 1h4v2h-4z" fill="#d9534a" /><path d="M4 6h15v13H4z" fill="none" stroke="#999" stroke-dasharray="1.500 1.500" /><path d="M10 12h14v13H10z" fill="#d3e6f4" stroke="#345" stroke-dasharray="2 1.500" /><path d="M20.500 16v9.500l2.200-2 1.600 3.500 1.700-.8-1.600-3.400 2.900-.3z" fill="#fff" stroke="#555" stroke-width=".8" /></svg></span>
      </div>
      <span class="addr"><span v-fit="53">Address</span></span>
      <div class="abox">
        <svg class="chev" width="10" height="8" viewBox="0 0 10 8"><path d="m.7 1.500 4.300 5 4.300-5" fill="none" stroke="#444" stroke-width="1.200" /></svg>
        <span class="ref"><svg width="16" height="16" viewBox="0 0 16 16"><path d="M5 2.500A6.300 6.300 0 1 0 11 2.500M5.500 6V2H2" fill="none" stroke="#6b6b6b" stroke-width="1.700" /></svg></span>
      </div>
      <span class="desk"><span v-fit="54.500">Desktop</span></span>
      <span class="raq">»</span>
      <svg class="tray" width="64" height="24" viewBox="1650 0 64 24"><path d="m1654.500 16 7.500-8 7.500 8" fill="none" stroke="#eee" stroke-width="1.600" /><path d="M1695 20c4 0 3-6-2-6-6 1-6 8-2 8 4-1 6-10 9-17 2-3 4-1 3 2l-5 10c-1 3-1 5 0 5M1702 12c4-1 6 0 4 2" fill="none" stroke="#eee" stroke-width="1.500" /></svg>
      <span class="lang"><span v-fit="28">DEU</span></span>
      <div class="clock"><div><span v-fit="34.500">17:06</span></div><div><span v-fit="75">19/01/2021</span></div></div>
      <svg class="note" width="20" height="20" viewBox="0 0 20 20"><path d="M0 0h20v17h-7l-3 3-3-3H0z" fill="#fff" /><path d="M4 4.500h12M4 8.500h12M4 12.500h8" stroke="#37372a" stroke-width="1.300" /></svg>
      <i class="peek" />
    </div>
  </div>
</template>

<style>
body { margin: 0; overflow: hidden; }
</style>

<style scoped>
.app { width: 1920px; height: 1080px; display: flex; flex-direction: column; font-family: "Open Sans", "Noto Sans", sans-serif; font-size: 14.5px; color: #3d4244; background: #f8f9fb; overflow: hidden; white-space: nowrap; }
.defs { position: absolute; }
svg { display: block; flex: none; overflow: visible; }
span, b, i, strong { flex: none; }
b { font-weight: 400; }
.tri { width: 0; height: 0; border: 4.500px solid transparent; border-top: 5.500px solid #5a5e60; border-bottom: 0; }
.tri.dim { border-top-color: #a4a9aa; }

.titlebar { height: 34px; background: #d9dfde; display: flex; align-items: center; flex: none; }
.logo { width: 18px; height: 19px; margin-left: 15px; margin-top: -1px; }
.brand { font-family: Lato, sans-serif; font-size: 23px; margin-left: 8px; line-height: 28px; color: #474d4e; margin-top: -5px; -webkit-text-stroke: .4px #474d4e; }
.branddot { width: 4px; height: 4px; border-radius: 2px; background: #555; margin: -8px 0 0 1px; }
.quick { display: flex; align-items: center; height: 30px; border-left: 1px solid #a8adae; border-right: 1px solid #a8adae; margin-left: 14px; margin-top: 4px; width: 341px; }
.q { display: flex; justify-content: center; align-items: center; margin-top: -4px; }
.q svg { width: 19px; height: 19px; }
.more { width: 30px; display: flex; justify-content: center; }
.more i { width: 0; border: 5px solid transparent; border-top: 6px solid #444; border-bottom: 0; position: relative; top: 1px; }
.more i::before { content: ""; position: absolute; left: -6px; top: -10px; width: 12px; height: 2px; background: #444; }
.title { margin-left: 257px; font-size: 15px; color: #4b5052; margin-top: -1px; }
.wincon { margin-left: auto; margin-right: 12px; margin-top: -2px; }

.tabs { height: 35px; background: #3e4648; display: flex; flex: none; font-size: 15.5px; }
.tab { padding: 0 28.750px; display: flex; align-items: center; color: #fff; padding-top: 1px; height: 34px; }
.tab.file { background: linear-gradient(165deg, #69cf49, #41a629); padding: 1px 25.250px 0; }
.tab.active { background: #f8f9fb; color: #4b842c; }
.tab.active + .tab { padding-left: 28.500px; }
.help { margin-left: auto; margin-right: 4px; margin-top: 5px; }
.qm { font: bold 16px "Open Sans", sans-serif; fill: #fff; }

.ribbon { height: 135px; display: flex; background: #f8f9fb; border-bottom: 1px solid #b5b9bc; flex: none; }
.group { border-right: 1px solid #a9adb0; margin: 3px 0 2px; height: 130px; display: flex; flex-direction: column; box-sizing: border-box; }
.manage { width: 182px; } .custom { width: 337px; } .report { width: 163px; } .measure { width: 73px; }
.query { width: 88px; } .inspect { width: 439px; } .study { width: 370px; }
.parts { height: 104px; display: flex; flex: none; margin-top: -3px; }
.col { margin-left: 8px; }
.col + .col { margin-left: 0; }
.c180 { width: 180px; } .c166 { width: 166px; } .c151 { width: 151px; } .c211 { width: 211px; }
.study .col { margin-left: 10px; }
.cmd { height: 34px; display: flex; align-items: center; }
.cmd svg { width: 20px; height: 20px; margin-right: 5px; margin-top: -1px; }
.cmd .tri { margin-left: 8.500px; margin-top: -2px; }
.off { color: #b4b7b9; }
.off svg { opacity: .85; }
.big { display: flex; flex-direction: column; align-items: center; }
.big svg { width: 40px; height: 40px; margin: 7px 0 12px; }
.big .line { height: 20px; line-height: 20px; }
.big .tri { margin-top: 6px; }
.b72 { width: 72px; } .b87 { width: 87px; } .b74 { width: 74px; margin-left: 8px; } .b60 { width: 60px; margin-left: -1px; }
.gtitle { display: flex; flex: none; justify-content: center; align-items: center; height: 32px; padding-left: 1px; }
.gtitle .tri { margin-left: 5px; margin-top: -2px; }

.work { height: 783px; display: flex; flex: none; }
.side { width: 354px; border-right: 3px solid #dfe2e4; background: #f8f9fb; display: flex; flex-direction: column; }
.stabs { display: flex; background: #d9dfde; height: 37px; font-size: 15px; }
.stab { display: flex; align-items: center; }
.stab b { margin-top: -1px; }
.stab.on { width: 124px; background: #f8f9fb; }
.s24 { width: 23px; height: 23px; }
.s24.t1 { width: 18px; height: 24px; margin: 0 8px 0 12px; }
.fold { width: 124px; padding-left: 9px; box-sizing: border-box; }
.fold b { margin-left: 6px; width: 76px; overflow: hidden; -webkit-mask-image: linear-gradient(90deg, #000 80%, transparent); mask-image: linear-gradient(90deg, #000 80%, transparent); }
.favs { padding-left: 8px; }
.favs b { margin-left: 6px; }
.shead { height: 34px; display: flex; align-items: center; padding-left: 35px; font-size: 14.500px; }
.shead strong { margin-top: 1px; }
.shead svg { width: 25px; height: 25px; }
.h1 { margin-left: 95px; }
.h1 + .tri { margin-left: 9px; margin-right: 11px; }
.h2 + .tri { margin-left: 8px; margin-right: 16px; }
.filter { height: 36px; display: flex; align-items: center; padding-left: 14px; }
.fun { width: 20px; height: 20px; margin-right: 4px; }
.input { width: 258px; height: 34px; box-sizing: border-box; border: 1px solid #999da0; background: #fff; display: flex; align-items: center; justify-content: flex-end; padding-right: 5px; }
.filter .tri { margin-left: 7px; }
.plus { margin-left: 14px; }
.treewrap { height: 666px; margin-top: 3px; display: flex; }
.nodes { width: 330px; height: 665px; overflow: hidden; font-size: 13px; line-height: 10px; color: #4a4e50; }
.node { height: 24px; display: flex; align-items: center; }
.exp { width: 38px; padding-left: 18px; box-sizing: border-box; }
.exp i { display: block; width: 0; height: 0; }
.exp .shut { border: 6px solid transparent; border-left: 9px solid #808486; border-right: 0; margin-left: 2px; }
.exp .open { border: 5.500px solid transparent; border-top: 9px solid #808486; border-bottom: 0; }
.node svg { width: 20px; height: 20px; margin-right: 6px; }
.child svg { margin-left: 25px; }
.gone { color: #b4b8b9; }
.scroll { width: 18px; height: 664px; box-sizing: border-box; border: 1px solid #b3b7b9; background: #dfe1e2; display: flex; flex-direction: column; margin-top: 1px; }
.sb { height: 17px; background: #f8f9fb; display: flex; align-items: center; justify-content: center; }
.up { border: 4.500px solid transparent; border-bottom: 5.500px solid #85898b; border-top: 0; }
.sb .tri { border-top-color: #85898b; }
.thumb { height: 582px; margin: 24px -1px 21px; border: 1px solid #b3b7b9; background: #fafafa; }

.view { width: 1563px; background: #e8eaee; position: relative; }
.model { margin-top: 1px; }
.s { fill: none; stroke-linecap: round; stroke-linejoin: round; }
.axis { fill: none; stroke: #633740; stroke-width: 3; stroke-dasharray: 36 8 8 8; }
.cs { font: 15px "Liberation Sans", sans-serif; fill: #7a4a56; }
.ax { font: 15px "Liberation Sans", sans-serif; fill: #111; }
.vtools { position: absolute; left: 536px; top: 7px; height: 36px; border: 1px solid #9fa3a5; background: #f8f9fb; display: flex; align-items: center; padding-left: 2px; width: 486px; }
.vt { width: 32.230px; display: flex; justify-content: center; }
.vt i { width: 27px; height: 27px; border: 1px solid transparent; display: flex; align-items: center; justify-content: center; }
.vt.on i { background: #dcdfe1; border-color: #a0a4a6; }
.vt.on { position: relative; left: 2px; }
.vt svg { width: 20px; height: 20px; }

.status { height: 41px; border-top: 1px solid #b5babc; background: #f8f9fb; display: flex; align-items: center; flex: none; }
.sbtn { width: 24px; height: 24px; border: 1px solid #9ea2a4; background: #dddfe0; margin-left: 7px; display: flex; align-items: center; justify-content: center; margin-top: 4px; }
.sbtn svg { width: 15px; height: 20px; margin-left: 4px; }
.s20 { width: 20px; height: 20px; margin: 4px 0 0 10px; }
.s20.g { margin-left: 7px; }
.vline { width: 1px; height: 26px; background: #a5a9ab; margin: 4px 0 0 13px; }
.find { display: flex; align-items: center; margin-left: 1397px; height: 32px; border-left: 1px solid #a5a9ab; border-right: 1px solid #a5a9ab; padding: 0 2px 0 7px; position: relative; box-sizing: border-box; width: 62px; }
.find::before { content: ""; position: absolute; left: 4px; top: 0; width: 1px; height: 32px; background: #a5a9ab; }
.bino { width: 33px; height: 28px; border: 1px solid #bbbfc1; border-right: 0; box-sizing: border-box; display: flex; align-items: center; justify-content: center; }
.bino svg { width: 20px; height: 20px; }
.fd { width: 18px; height: 28px; border: 1px solid #bbbfc1; box-sizing: border-box; display: flex; align-items: center; justify-content: center; }
.combo { margin-left: 119px; width: 217px; height: 28px; border: 1px solid #a5a9ab; box-sizing: border-box; display: flex; margin-top: 2px; }
.ct { flex: 1; background: #f5f6f6; padding-left: 8px; line-height: 26px; }
.cd { width: 18px; border-left: 1px solid #a5a9ab; display: flex; align-items: center; justify-content: center; }

.taskbar { height: 50px; background: linear-gradient(90deg, #37372a, #393a2d 60%, #322e24); display: flex; align-items: center; flex: none; color: #f0f0ee; font-size: 15px; }
.start { width: 60px; display: flex; justify-content: center; }
.search { width: 430px; height: 50px; box-sizing: border-box; border: 1px solid #b9bab6; background: #f1f1f1; color: #2b2b2b; font-size: 17.500px; display: flex; align-items: center; padding-left: 14px; }
.search svg { margin-right: 13px; }
.apps { display: flex; margin-left: 3px; height: 50px; }
.tb { width: 62px; display: flex; align-items: center; justify-content: center; position: relative; box-sizing: border-box; }
.up1 { margin-top: -2px; }
.tb.run::after { content: ""; position: absolute; left: 6px; right: 5px; bottom: 0; height: 3px; background: #76b3ea; }
.tb.sel { background: #5f6056; }
.tb.sel::after { left: 0; right: 0; }
.tb em { position: absolute; left: 36px; top: 24px; width: 20px; height: 20px; border: 1px solid #aaa; border-radius: 50%; background: #37372a; font: bold 13px/19px "Open Sans", sans-serif; text-align: center; color: #fff; }
.addr { margin-left: 99px; color: #d6d6cf; width: 59px; }
.abox { width: 284px; height: 37px; background: #fff; display: flex; align-items: center; justify-content: flex-end; margin-top: 1px; }
.chev { margin-right: 15px; }
.ref { width: 38px; height: 37px; border-left: 1px solid #ccc; display: flex; align-items: center; justify-content: center; }
.desk { margin-left: 12px; width: 64px; color: #d6d6cf; }
.raq { font-size: 19px; width: 19px; height: 42px; line-height: 20px; }
.tray { margin-right: 11px; }
.lang { width: 38px; }
.clock { width: 90px; text-align: center; line-height: 23.500px; margin-top: 1px; }
.note { margin-left: 16px; }
.peek { width: 1px; height: 50px; background: #77776c; margin-left: 25px; }
</style>
